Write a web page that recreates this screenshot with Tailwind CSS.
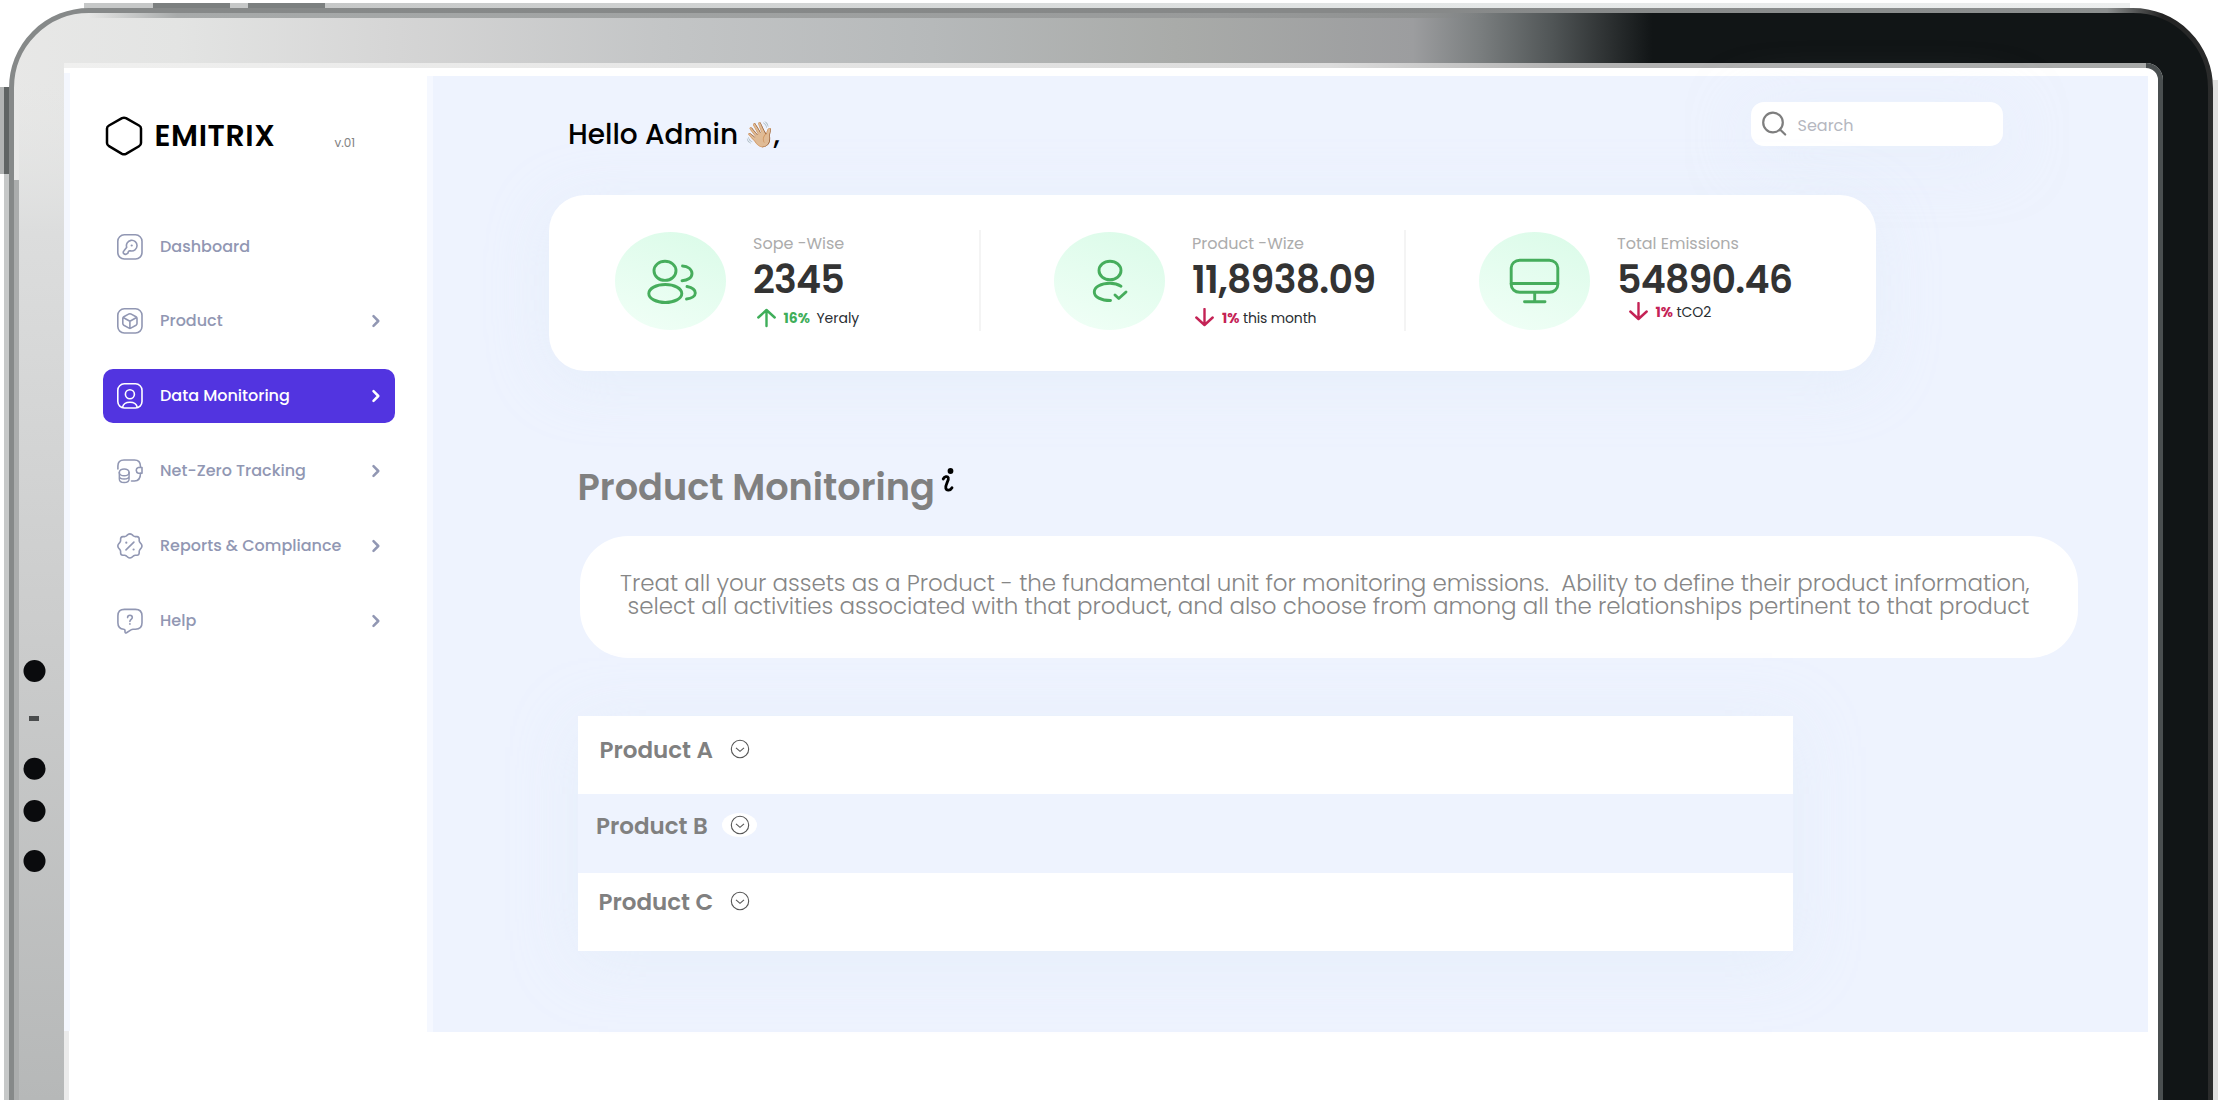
<!DOCTYPE html>
<html lang="en">
<head>
<meta charset="utf-8">
<title>Emitrix</title>
<script src="https://cdn.jsdelivr.net/npm/@tailwindcss/browser@4"></script>
</head>
<body class="bg-white font-[Poppins,Inter,sans-serif]">
<div class="relative h-[1100px] w-[2218px] overflow-hidden">

  <!-- tablet frame -->
  <svg class="absolute inset-0" width="2218" height="1100" viewBox="0 0 2218 1100" fill="none">
    <defs>
      <linearGradient id="body" gradientUnits="userSpaceOnUse" x1="0" y1="0" x2="2218" y2="0">
        <stop offset="0" stop-color="#e8e8e7"/><stop offset=".08" stop-color="#e3e4e3"/><stop offset=".18" stop-color="#d5d5d5"/><stop offset=".3" stop-color="#c3c5c6"/><stop offset=".42" stop-color="#b6b9ba"/><stop offset=".53" stop-color="#a9aba9"/><stop offset=".637" stop-color="#9c9d9f"/><stop offset=".668" stop-color="#797d7e"/><stop offset=".7" stop-color="#505556"/><stop offset=".722" stop-color="#313536"/><stop offset=".745" stop-color="#111516"/><stop offset="1" stop-color="#111516"/>
      </linearGradient>
      <linearGradient id="edge" gradientUnits="userSpaceOnUse" x1="0" y1="0" x2="2218" y2="0">
        <stop offset="0" stop-color="#868989"/><stop offset=".6" stop-color="#868888"/><stop offset=".95" stop-color="#8c8f8f"/><stop offset=".975" stop-color="#222"/><stop offset="1" stop-color="#2c2d2d"/>
      </linearGradient>
      <linearGradient id="side" x1="0" y1="0" x2="0" y2="1">
        <stop offset="0" stop-color="#e4e5e4" stop-opacity="0"/><stop offset=".15" stop-color="#dcdddd"/><stop offset=".55" stop-color="#cbcccc"/><stop offset="1" stop-color="#b6b8b8"/>
      </linearGradient>
      <linearGradient id="lip" gradientUnits="userSpaceOnUse" x1="0" y1="0" x2="2218" y2="0">
        <stop offset="0" stop-color="#f1f1f0"/><stop offset=".6" stop-color="#dcdcdc"/><stop offset=".7" stop-color="#b4b4b4"/><stop offset="1" stop-color="#a6a8a7"/>
      </linearGradient>
      <linearGradient id="rim" gradientUnits="userSpaceOnUse" x1="0" y1="0" x2="2218" y2="0">
        <stop offset=".04" stop-color="#a7aaaa" stop-opacity="0"/><stop offset=".08" stop-color="#a7aaaa"/><stop offset=".55" stop-color="#989a9a"/><stop offset=".64" stop-color="#8f9191"/><stop offset=".67" stop-color="#7d8080" stop-opacity="0"/>
      </linearGradient>
      <linearGradient id="rimTop" gradientUnits="userSpaceOnUse" x1="325" y1="0" x2="2130" y2="0">
        <stop offset="0" stop-color="#c6c8c8"/><stop offset=".6" stop-color="#e3e6e6"/><stop offset="1" stop-color="#eceeee"/>
      </linearGradient>
    </defs>
    <rect x="84" y="3" width="2046" height="6" fill="url(#rimTop)"/>
    <path d="M153 3H230V10H153zM248 3H325V10H248z" fill="#7c8080"/>
    <path d="M0 87H4V174H0z" fill="#b2b4b4"/>
    <path d="M2213 80H2218V1100H2213z" fill="#e0e0df"/>
    <path d="M4 1110V174H9V1110z" fill="#c6c8c8"/>
    <path d="M11.500 1110V88A77.500 77.500 0 0 1 89 10.500H2133A77.500 77.500 0 0 1 2210.500 88V1110z" fill="url(#body)" stroke="url(#edge)" stroke-width="5"/>
    <path d="M4 87H9V174H4z" fill="#606464"/>
    <rect x="85" y="13" width="1420" height="5" fill="url(#rim)"/>
    <path d="M16.500 180V1100" stroke="#abadad" stroke-width="5"/>
    <path d="M19 80H64V1100H19z" fill="url(#side)"/>
    <path d="M64 1100V63H2146A17 17 0 0 1 2163 80V1100z" fill="#fff"/>
    <path d="M64 65.500H2146" stroke="#f0f0f0" stroke-width="5"/>
    <rect x="64" y="63" width="2082" height="5" fill="url(#lip)"/>
    <path d="M2146 65.500A14.500 14.500 0 0 1 2160.500 80V1100" stroke="#4a4f50" stroke-width="5"/>
    <path d="M64 73H70V1031H64z" fill="#f4f7fe"/>
    <path d="M64 1031H69V1100H64z" fill="#ebebeb"/>
    <g fill="#0a0b0d">
      <circle cx="34.500" cy="671" r="11"/><circle cx="34.500" cy="768.700" r="11"/><circle cx="34.500" cy="811" r="11"/><circle cx="34.500" cy="861" r="11"/>
      <rect x="29" y="716" width="10" height="5" fill="#4a4c4d"/>
    </g>
  </svg>

  <div class="relative flex h-full pl-[70px] pt-[76px]">

    <!-- sidebar -->
    <aside class="w-[357px] shrink-0">
      <div class="flex h-[120px] items-start pl-[35px] pt-[38px]">
        <svg class="mt-[.5px]" width="38" height="42" viewBox="0 0 38 42" fill="none" stroke="#000" stroke-width="2.500" stroke-linejoin="round"><path d="M17 3.200Q19 2.200 21 3.200L34 10.500Q36 11.600 36 13.500V28Q36 30 34 31.200L21 38.800Q19 39.900 17 38.800L4 31.200Q2 30 2 28V13.500Q2 11.600 4 10.500Z"/></svg>
        <h1 class="mt-px ml-[11.500px] w-[180px] text-[30px] leading-[42px] font-semibold tracking-[0.6px] text-black">EMITRIX</h1>
        <span class="mt-[18px] text-[12px] leading-[22px] text-[#838383]">v.01</span>
      </div>
      <nav class="mt-[23.500px] ml-[32.500px] flex w-[292px] flex-col gap-[20.900px] text-[16px] font-medium text-[#9197b3]">
        <a class="flex h-[54px] items-center pl-3.5">
          <svg width="26" height="26" viewBox="0 0 26 26" fill="none" stroke="currentColor" stroke-width="1.600"><rect x=".8" y=".8" width="24.200" height="24.200" rx="6.500"/><path d="M9.700 13.300A5.300 5.300 0 1 1 13.600 16.800L12.200 16.900L11.300 17.800L10.900 19.200Q8.500 21.300 6.800 19.700Q5.600 18.400 7 16.800Z" stroke-linejoin="round"/><circle cx="14.700" cy="11.500" r="1.100" fill="currentColor" stroke="none"/></svg>
          <span class="ml-[17.500px] flex-1">Dashboard</span>
        </a>
        <a class="flex h-[54px] items-center pl-3.5">
          <svg width="26" height="26" viewBox="0 0 26 26" fill="none" stroke="currentColor" stroke-width="1.600" stroke-linejoin="round"><rect x=".8" y=".8" width="24.200" height="24.200" rx="6.500"/><path d="M12 5.900Q12.900 5.500 13.800 5.900L19 8.800Q20 9.400 20 10.400V15.600Q20 16.700 19 17.300L13.800 20.100Q12.900 20.600 12 20.100L6.800 17.300Q5.800 16.700 5.800 15.600V10.400Q5.800 9.400 6.800 8.800ZM6.200 9.500L12.900 13.200L19.600 9.500M12.900 13.200V20.300"/></svg>
          <span class="ml-[17.500px] flex-1">Product</span>
          <svg class="mr-[13px]" width="12" height="14" viewBox="0 0 12 14" fill="none" stroke="currentColor" stroke-width="2.500" stroke-linecap="round" stroke-linejoin="round"><path d="M3.500 2.200L8.300 7L3.500 11.800"/></svg>
        </a>
        <a class="flex h-[54px] items-center rounded-[10px] bg-[#5234e0] pl-3.5 text-white">
          <svg width="26" height="26" viewBox="0 0 26 26" fill="none" stroke="currentColor" stroke-width="1.600"><rect x=".8" y=".8" width="24.200" height="24.200" rx="6.500"/><circle cx="12.900" cy="11.200" r="4.500"/><path d="M5.500 24.300C7 17.500 18.800 17.500 20.300 24.300"/></svg>
          <span class="ml-[17.500px] flex-1">Data Monitoring</span>
          <svg class="mr-[13px]" width="12" height="14" viewBox="0 0 12 14" fill="none" stroke="currentColor" stroke-width="2.500" stroke-linecap="round" stroke-linejoin="round"><path d="M3.500 2.200L8.300 7L3.500 11.800"/></svg>
        </a>
        <a class="flex h-[54px] items-center pl-3.5">
          <svg width="26" height="26" viewBox="0 0 26 26" fill="none" stroke="currentColor" stroke-width="1.600" stroke-linecap="round" stroke-linejoin="round"><path d="M.9 11V8Q.9 2 7 2H17.500Q23.500 2 23.500 8.500V9.300M23.500 15.300C23.500 20.500 21.500 23 17.500 23H14.500"/><path d="M25 9.500H21.300A3 3 0 0 0 21.300 15.200H25Z"/><ellipse cx="7.200" cy="14.400" rx="4.900" ry="3.400"/><path d="M2.300 14.400V20.900C2.300 25.600 12.100 25.600 12.100 20.900V14.400M2.300 18C2.300 22 12.100 22 12.100 18" stroke-width="1.400"/></svg>
          <span class="ml-[17.500px] flex-1">Net-Zero Tracking</span>
          <svg class="mr-[13px]" width="12" height="14" viewBox="0 0 12 14" fill="none" stroke="currentColor" stroke-width="2.500" stroke-linecap="round" stroke-linejoin="round"><path d="M3.500 2.200L8.300 7L3.500 11.800"/></svg>
        </a>
        <a class="flex h-[54px] items-center pl-3.5">
          <svg width="26" height="26" viewBox="0 0 26 26" fill="none" stroke="currentColor" stroke-width="1.600" stroke-linecap="round" stroke-linejoin="round"><path d="M10.800 1.700Q12.900 0 15 1.700L16.400 2.900Q17.300 3.500 18.300 3.600H20Q22.200 3.800 22.200 6V7.700Q22.300 8.700 23 9.500L24.200 10.900Q25.700 13 24.200 15L23 16.500Q22.300 17.400 22.200 18.400V20Q22 22.200 20 22.300H18.300Q17.300 22.400 16.400 23L15 24.200Q12.900 25.800 10.800 24.200L9.400 23Q8.500 22.400 7.500 22.300H5.800Q3.700 22.200 3.600 20V18.400Q3.500 17.400 2.800 16.500L1.600 15Q.1 13 1.600 10.900L2.800 9.500Q3.500 8.700 3.600 7.700V6Q3.600 3.800 5.800 3.600H7.500Q8.500 3.500 9.400 2.900ZM9 16.900L16.900 9.100"/><g fill="currentColor" stroke="none"><circle cx="9.300" cy="9.700" r="1.100"/><circle cx="16.600" cy="16.500" r="1.100"/></g></svg>
          <span class="ml-[17.500px] flex-1">Reports &amp; Compliance</span>
          <svg class="mr-[13px]" width="12" height="14" viewBox="0 0 12 14" fill="none" stroke="currentColor" stroke-width="2.500" stroke-linecap="round" stroke-linejoin="round"><path d="M3.500 2.200L8.300 7L3.500 11.800"/></svg>
        </a>
        <a class="flex h-[54px] items-center pl-3.5">
          <svg width="26" height="26" viewBox="0 0 26 26" fill="none" stroke="currentColor" stroke-width="1.600" stroke-linecap="round" stroke-linejoin="round"><path d="M7.500 1.400H18.400Q25 1.400 25 8V14.800Q25 21.300 18.400 21.300H16Q15 21.300 14 21.900L9.500 24.700Q8 25.400 8 23.800V22.500Q8 21.300 6.800 21.300Q.9 20.800 .9 14.800V8Q.9 1.400 7.500 1.400Z"/><path d="M10.600 9.600C10.600 6.500 15.300 6.500 15.300 9.600C15.300 11.300 12.900 11.400 12.900 13.400"/><circle cx="12.900" cy="15.900" r=".9" fill="currentColor" stroke="none"/></svg>
          <span class="ml-[17.500px] flex-1">Help</span>
          <svg class="mr-[13px]" width="12" height="14" viewBox="0 0 12 14" fill="none" stroke="currentColor" stroke-width="2.500" stroke-linecap="round" stroke-linejoin="round"><path d="M3.500 2.200L8.300 7L3.500 11.800"/></svg>
        </a>
      </nav>
    </aside>

    <!-- content -->
    <main class="flex h-[956px] w-[1721px] flex-col border-l-[6px] border-[#f5f8ff] bg-[#eef3fe]">
      <header class="flex h-[118.500px] items-start justify-between pr-[145px] pl-[135px]">
        <h2 class="mt-[39px] flex items-center text-[28px] leading-10 font-medium text-black">Hello Admin<span class="ml-[5.500px] w-[30px] text-[25px]">👋🏼</span><span>,</span></h2>
        <label class="mt-[26px] flex h-11 w-[252px] items-center rounded-[13px] bg-white pl-2.5 shadow-[0_10px_60px_#e2ecf980]">
          <svg width="26" height="26" viewBox="0 0 26 26" fill="none" stroke="#7e7e7e" stroke-width="2.200" stroke-linecap="round"><circle cx="12" cy="11.500" r="9.800"/><path d="M19 18.500L24.200 23.500"/></svg>
          <span class="mt-[3px] ml-[10.500px] text-[16px] text-[#b5b7c0]">Search</span>
        </label>
      </header>

      <section class="ml-[115.500px] flex h-[176.500px] w-[1327px] items-start rounded-[36px] bg-white pt-[35.500px] shadow-[0_10px_60px_#e2ecf9b0]">
        <div class="flex h-[101px] w-[432px] border-r-2 border-[#f4f4f4] pl-[66px]">
          <div class="mt-[1.500px] flex h-[98px] w-[111.500px] rounded-[50%] bg-linear-20 from-[#f1fff7] to-[#dafbe8]">
            <svg width="111" height="98" viewBox="0 0 111 98" fill="none" stroke="#46ad5c" stroke-width="2.900" stroke-linecap="round"><ellipse cx="50" cy="38.800" rx="11" ry="9.600"/><ellipse cx="50.300" cy="61.500" rx="16.500" ry="9"/><path d="M67.500 34C73 34 77 37.500 77 41.500C77 45.500 73 48.500 67 48.700M72 54.500C77 55.500 80.300 58 80.300 61C80.300 64 77 66.500 71.500 67"/></svg>
          </div>
          <div class="ml-[27px]">
            <p class="text-[16px] leading-7 text-[#acacac]">Sope -Wise</p>
            <p class="mt-px -mb-px text-[38px] leading-[41px] font-semibold tracking-[-0.8px] text-[#333]">2345</p>
            <p class="flex h-[38px] items-center pl-[3.500px] text-[14px] text-[#292d32]"><svg width="20" height="20" viewBox="0 0 20 20" fill="none" stroke="#3fae5a" stroke-width="2.400" stroke-linecap="round" stroke-linejoin="round"><path d="M9.500 18V2.500M1.300 9.500L9.500 2L17.700 9.500"/></svg><b class="ml-[7px] text-[#3fae5a]">16%</b><span class="ml-[6.500px]">Yeraly</span></p>
          </div>
        </div>
        <div class="flex h-[101px] w-[425px] border-r-2 border-[#f4f4f4] pl-[73px]">
          <div class="mt-[1.500px] flex h-[98px] w-[111.500px] rounded-[50%] bg-linear-20 from-[#f1fff7] to-[#dafbe8]">
            <svg width="111" height="98" viewBox="0 0 111 98" fill="none" stroke="#46ad5c" stroke-width="2.900" stroke-linecap="round" stroke-linejoin="round"><ellipse cx="56" cy="38.500" rx="11" ry="9.300"/><path d="M67 54.200C64 52.300 60 51.300 56 51.300C47 51.300 40.300 55 40.300 60C40.300 65 47 68.500 56.500 68.500M61 63L64.800 66.500L72 60"/></svg>
          </div>
          <div class="ml-[27px]">
            <p class="text-[16px] leading-7 text-[#acacac]">Product -Wize</p>
            <p class="mt-px -mb-px text-[38px] leading-[41px] font-semibold tracking-[-0.75px] text-[#333]">11,8938.09</p>
            <p class="flex h-[38px] items-center pl-[3px] text-[14px] text-[#292d32]"><svg width="20" height="20" viewBox="0 0 20 20" fill="none" stroke="#c42255" stroke-width="2.400" stroke-linecap="round" stroke-linejoin="round"><path d="M9.500 1V16.500M1.300 9.500L9.500 17L17.700 9.500"/></svg><b class="ml-[7px] text-[#c42255]">1%</b><span class="ml-[3.500px] tracking-[-0.150px]">this month</span></p>
          </div>
        </div>
        <div class="flex h-[101px] pl-[73px]">
          <div class="mt-[1.500px] flex h-[98px] w-[111.500px] rounded-[50%] bg-linear-20 from-[#f1fff7] to-[#dafbe8]">
            <svg width="111" height="98" viewBox="0 0 111 98" fill="none" stroke="#46ad5c" stroke-width="2.900" stroke-linecap="round"><rect x="32.200" y="28.300" width="46.600" height="32" rx="8.500" ry="7.500"/><path d="M32.200 51.500H78.800M55.700 60.500V69.500M45.500 69.700H66"/></svg>
          </div>
          <div class="ml-[27px]">
            <p class="text-[16px] leading-7 text-[#acacac]">Total Emissions</p>
            <p class="mt-px -mb-px text-[38px] leading-[41px] font-semibold tracking-[-0.8px] text-[#333]">54890.46</p>
            <p class="flex h-[26px] items-center pl-[11.500px] text-[14px] text-[#292d32]"><svg width="20" height="20" viewBox="0 0 20 20" fill="none" stroke="#c42255" stroke-width="2.400" stroke-linecap="round" stroke-linejoin="round"><path d="M9.500 1V16.500M1.300 9.500L9.500 17L17.700 9.500"/></svg><b class="ml-[7px] text-[#c42255]">1%</b><span class="ml-[3.500px]">tCO2</span></p>
          </div>
        </div>
      </section>

      <div class="mt-[91px] ml-[144.500px] flex h-[50px] items-start">
        <h3 class="text-[36.700px] leading-[51px] font-semibold text-[#808080]">Product Monitoring</h3>
        <svg class="mt-[5px] ml-[6.500px]" width="14" height="26" viewBox="0 0 14 26" fill="none" stroke="#000" stroke-width="2.800" stroke-linecap="round" stroke-linejoin="round"><circle cx="9.500" cy="4" r="2.900" fill="#000" stroke="none"/><path d="M2.200 12C3.500 9.500 6.500 8.800 7.300 10.700C8.200 13 4 18 4.800 21.200C5.500 24.200 9.500 23.500 11 20.800"/></svg>
      </div>

      <p class="mt-[24px] ml-[147px] h-[122px] w-[1498px] rounded-[48px] bg-white pt-[35.500px] pr-[48.500px] text-right text-[23px] leading-[23.500px] font-light tracking-[-0.060px] whitespace-nowrap text-[#868686]">Treat all your assets as a Product - the fundamental unit for monitoring emissions.&nbsp; Ability to define their product information,<br>select all activities associated with that product, and also choose from among all the relationships pertinent to that product</p>

      <section class="mt-[58px] ml-[144.500px] w-[1215.500px] bg-white text-[23px] font-semibold text-[#808080] shadow-[0_10px_60px_#e2ecf9b0]">
        <div class="flex h-[78.300px] items-start pt-4 pl-[22px]">
          <span class="w-[122.500px] leading-[37px]">Product A</span>
          <span class="mt-[5px] flex h-6 w-[35px] items-center justify-center rounded-[50%]"><svg width="20" height="20" viewBox="0 0 20 20" fill="none" stroke="#555" stroke-width="1.100"><circle cx="10" cy="10" r="8.700"/><path d="M6 8.800L10 12.300L14 8.800"/></svg></span>
        </div>
        <div class="flex h-[78.400px] items-start bg-[#eef3fe] pt-[14px] pl-[18.500px]">
          <span class="w-[126px] leading-[37px]">Product B</span>
          <span class="mt-[5px] flex h-6 w-[35px] items-center justify-center rounded-[50%] bg-white"><svg width="20" height="20" viewBox="0 0 20 20" fill="none" stroke="#555" stroke-width="1.100"><circle cx="10" cy="10" r="8.700"/><path d="M6 8.800L10 12.300L14 8.800"/></svg></span>
        </div>
        <div class="flex h-[78.300px] items-start pt-[11.500px] pl-[21px]">
          <span class="w-[123.500px] leading-[37px]">Product C</span>
          <span class="mt-[5px] flex h-6 w-[35px] items-center justify-center rounded-[50%]"><svg width="20" height="20" viewBox="0 0 20 20" fill="none" stroke="#555" stroke-width="1.100"><circle cx="10" cy="10" r="8.700"/><path d="M6 8.800L10 12.300L14 8.800"/></svg></span>
        </div>
      </section>
    </main>
  </div>
</div>
</body>
</html>
